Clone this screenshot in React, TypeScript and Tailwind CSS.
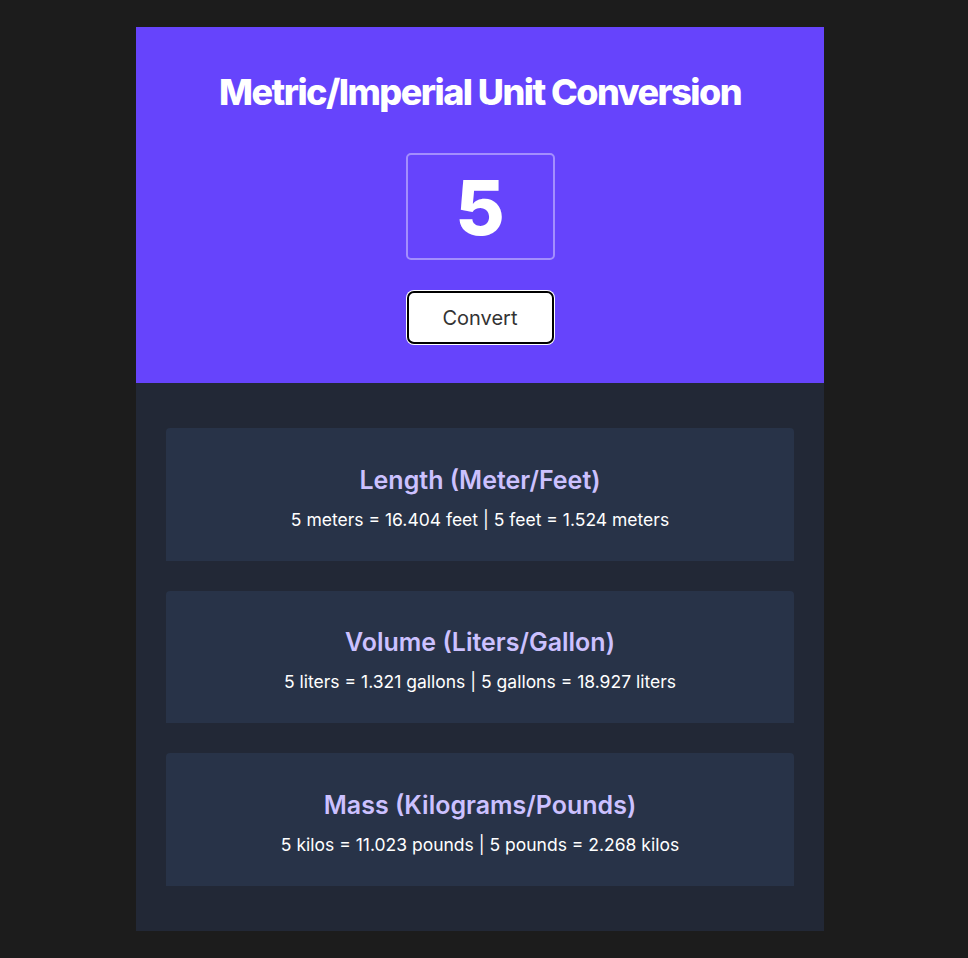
import React, { useState } from 'react';

const font = { fontFamily: 'Inter, "Noto Sans", sans-serif' };

interface Conversion {
  title: string;
  metric: string;
  imperial: string;
  factor: number;
}

const conversions: Conversion[] = [
  { title: 'Length (Meter/Feet)', metric: 'meters', imperial: 'feet', factor: 3.28084 },
  { title: 'Volume (Liters/Gallon)', metric: 'liters', imperial: 'gallons', factor: 0.264172 },
  { title: 'Mass (Kilograms/Pounds)', metric: 'kilos', imperial: 'pounds', factor: 2.20462 },
];

export default function App() {
  const [value, setValue] = useState('5');
  const [num, setNum] = useState(5);

  return (
    <div className="min-h-screen bg-[#1c1c1c] pt-[27px]" style={font}>
      <div className="ml-[136px] w-[688px]">
        {/* Header */}
        <div className="bg-[#6644fc] flex flex-col items-center pt-[47px] pb-[39px]">
          <h1 className="text-white text-[36px] font-extrabold tracking-[-0.043em] leading-none">
            Metric/Imperial Unit Conversion
          </h1>
          <input
            value={value}
            onChange={(e) => setValue(e.target.value)}
            className="mt-[43px] w-[149px] h-[107px] bg-transparent border-2 border-white/40 rounded-[5px] text-center text-white text-[76px] font-extrabold outline-none"
          />
          <button
            onClick={() => setNum(Number(value) || 0)}
            className="mt-[31px] w-[147px] h-[53px] bg-white border-2 border-black rounded-[7px] ring-1 ring-white text-[20px] text-[#333]"
          >
            Convert
          </button>
        </div>

        {/* Results */}
        <div className="bg-[#222836] px-[30px] py-[45px] flex flex-col gap-[30px]">
          {conversions.map((c) => (
            <div
              key={c.title}
              className="bg-[#283348] rounded-t-[4px] h-[132.5px] flex flex-col items-center justify-center pt-[7px]"
            >
              <h2 className="text-[#ccc1ff] text-[25px] font-semibold leading-none">{c.title}</h2>
              <p className="mt-[18px] text-white text-[17.5px] leading-none">
                {num} {c.metric} = {(num * c.factor).toFixed(3)} {c.imperial} | {num} {c.imperial} ={' '}
                {(num / c.factor).toFixed(3)} {c.metric}
              </p>
            </div>
          ))}
        </div>
      </div>
    </div>
  );
}
